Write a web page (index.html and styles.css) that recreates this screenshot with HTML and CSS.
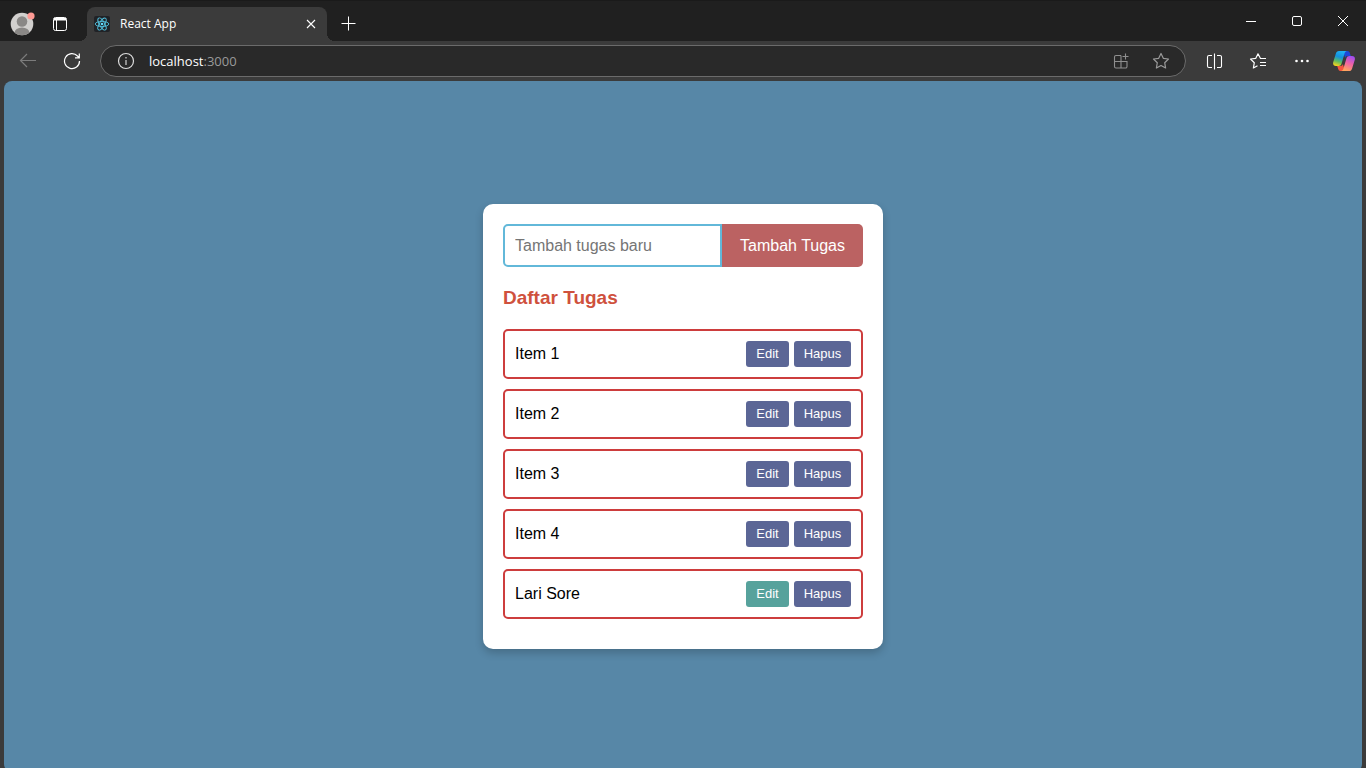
FILE: index.html
```html
<!DOCTYPE html>
<html lang="id">
<head>
<meta charset="utf-8">
<title>React App</title>
<link rel="stylesheet" href="styles.css">
</head>
<body>
<div class="browser">
  <header class="tabstrip">
    <button class="icon-btn profile" aria-label="Profile">
      <svg width="28" height="28" viewBox="0 0 28 28">
        <defs><clipPath id="face"><circle cx="14" cy="15" r="11.3"/></clipPath></defs>
        <circle cx="14" cy="15" r="11.3" fill="#d2d0ce"/>
        <g clip-path="url(#face)" fill="#8a8886"><circle cx="14" cy="12.5" r="5.3"/><ellipse cx="14" cy="24" rx="7.500" ry="5.500"/></g>
        <circle cx="23" cy="7" r="3.600" fill="#ff9a94"/>
      </svg>
    </button>
    <button class="icon-btn tab-actions" aria-label="Tab actions">
      <svg width="16" height="16" viewBox="0 0 16 16" fill="none" stroke="#fff" stroke-width="1">
        <rect x="1.500" y="1.500" width="13" height="13" rx="2"/><path d="M2 2h12v2.500H2z" fill="#fff" stroke="none"/><path d="M4.500 4v10.500"/>
      </svg>
    </button>
    <div class="tab">
      <svg class="favicon" width="16" height="16" viewBox="0 0 16 16" fill="none" stroke="#53c1de" stroke-width=".9">
        <rect width="16" height="16" rx="2" fill="#202226" stroke="none"/>
        <ellipse cx="8" cy="8" rx="6.800" ry="2.600"/>
        <ellipse cx="8" cy="8" rx="6.800" ry="2.600" transform="rotate(60 8 8)"/>
        <ellipse cx="8" cy="8" rx="6.800" ry="2.600" transform="rotate(120 8 8)"/>
        <circle cx="8" cy="8" r="1.300" fill="#61dafb" stroke="none"/>
      </svg>
      <span class="tab-title">React App</span>
      <button class="icon-btn tab-close" aria-label="Close tab">
        <svg width="10" height="10" viewBox="0 0 10 10" stroke="#fff" stroke-width="1.100"><path d="M1 1l8 8M9 1l-8 8"/></svg>
      </button>
    </div>
    <button class="icon-btn new-tab" aria-label="New tab">
      <svg width="15" height="15" viewBox="0 0 15 15" stroke="#fff" stroke-width="1"><path d="M7.500 .5v14M.5 7.500h14"/></svg>
    </button>
    <div class="window-controls">
      <button class="icon-btn window-btn" aria-label="Minimize"><svg width="10" height="10" viewBox="0 0 10 10" stroke="#fff"><path d="M0 5.500h10"/></svg></button>
      <button class="icon-btn window-btn" aria-label="Maximize"><svg width="10" height="10" viewBox="0 0 10 10" fill="none" stroke="#fff"><rect x=".5" y=".5" width="9" height="9" rx="1.500"/></svg></button>
      <button class="icon-btn window-btn" aria-label="Close"><svg width="10" height="10" viewBox="0 0 10 10" stroke="#fff"><path d="M0 0l10 10M10 0L0 10"/></svg></button>
    </div>
  </header>

  <nav class="toolbar" aria-label="Browser toolbar">
    <button class="icon-btn tool" aria-label="Back" disabled>
      <svg width="18" height="16" viewBox="0 0 18 16" fill="none" stroke="#7c7c7c" stroke-width="1.200"><path d="M17 7.500H1.500M8 1L1.500 7.500 8 14"/></svg>
    </button>
    <button class="icon-btn tool" aria-label="Refresh">
      <svg width="18" height="18" viewBox="0 0 18 18" fill="none" stroke="#fff" stroke-width="1.200"><path d="M16.500 9A7.500 7.500 0 1 1 14.500 4L16 5.500M16.300 1.500v4.300H12"/></svg>
    </button>
    <div class="omnibox">
      <button class="icon-btn site-info" aria-label="Site information">
        <svg width="18" height="18" viewBox="0 0 18 18" fill="none" stroke="#dcdcdc" stroke-width="1.200"><circle cx="9" cy="9" r="7.500"/><path d="M9 8v5M9 5v1.500" stroke-width="1.500" stroke="#b0b0b0"/></svg>
      </button>
      <div class="address" role="textbox" aria-label="Address" contenteditable="true" spellcheck="false"><span class="host">localhost</span>:3000</div>
      <button class="icon-btn omni-btn" aria-label="Install app">
        <svg width="16" height="16" viewBox="0 0 16 16" fill="none" stroke="#8f8f8f" stroke-width="1.100"><path d="M8 2.500H3A1.500 1.500 0 0 0 1.500 4v9.500A1.500 1.500 0 0 0 3 15h9.500a1.500 1.500 0 0 0 1.500-1.500V8.500H1.500M8 2.500V15M12.500 .5v6M9.500 3.500h6"/></svg>
      </button>
      <button class="icon-btn omni-btn" aria-label="Add to favorites">
        <svg width="18" height="18" viewBox="0 0 18 18" fill="none" stroke="#9a9a9a" stroke-width="1.200" stroke-linejoin="round"><path d="M9 1.500l2.300 4.800 5.200.7-3.800 3.700.9 5.300L9 13.500 4.400 16l.9-5.300L1.500 7l5.200-.7z"/></svg>
      </button>
    </div>
    <button class="icon-btn tool" aria-label="Split screen">
      <svg width="17" height="17" viewBox="0 0 17 17" fill="none" stroke="#fff" stroke-width="1.100"><path d="M6 2.500H3a1.500 1.500 0 0 0-1.500 1.500v9a1.500 1.500 0 0 0 1.500 1.500h3M11 2.500h3a1.500 1.500 0 0 1 1.500 1.500v9a1.500 1.500 0 0 1-1.500 1.500h-3M8.500 .5v16"/></svg>
    </button>
    <button class="icon-btn tool" aria-label="Favorites">
      <svg width="18" height="18" viewBox="0 0 18 18" fill="none" stroke="#fff" stroke-width="1.200" stroke-linejoin="round"><path d="M17 6.500h-5.500L9 1.800 6.800 6.300 1.500 7l3.800 3.700-.9 5.300L8.500 13.800M11 10.500h6M11 13.500h6"/></svg>
    </button>
    <button class="icon-btn tool" aria-label="Settings and more">
      <svg width="14" height="4" viewBox="0 0 14 4" fill="#fff"><circle cx="1.500" cy="2" r="1.300"/><circle cx="7" cy="2" r="1.300"/><circle cx="12.500" cy="2" r="1.300"/></svg>
    </button>
    <button class="icon-btn copilot" aria-label="Copilot">
      <svg width="22" height="22" viewBox="0 0 22 22">
        <defs>
          <linearGradient id="cool" x1=".6" y1="0" x2=".3" y2="1"><stop offset="0" stop-color="#1fb2f5"/><stop offset=".4" stop-color="#1490dd"/><stop offset=".7" stop-color="#5dbb63"/><stop offset="1" stop-color="#f5d21d"/></linearGradient>
          <linearGradient id="warm" x1=".8" y1="0" x2=".4" y2="1"><stop offset="0" stop-color="#9a4cf5"/><stop offset=".5" stop-color="#f063a5"/><stop offset="1" stop-color="#ffa65c"/></linearGradient>
        </defs>
        <path d="M10 1h4.500c1.300 0 1.900.7 2.300 1.900L17.800 6H15c-1.500 0-2.400.6-2.900 2z" fill="#1c48d8"/>
        <path d="M12 21H7.500c-1.300 0-1.900-.7-2.300-1.900L4.200 16H7c1.500 0 2.400-.6 2.900-2z" fill="#f4553f"/>
        <path d="M6 1h8c-1.300.2-2 1-2.400 2.300L8.600 13.500C8 15.300 7.200 16 5.700 16H3C.6 16-.3 14.300.2 12.300L2.800 3.800C3.400 1.800 4.300 1 6 1z" fill="url(#cool)"/>
        <path d="M16 21H8c1.300-.2 2-1 2.400-2.300L13.400 8.500C14 6.700 14.800 6 16.300 6H19c2.400 0 3.300 1.700 2.800 3.700l-2.600 8.500c-.6 2-1.500 2.800-3.200 2.800z" fill="url(#warm)"/>
      </svg>
    </button>
  </nav>

  <main class="page">
    <section class="card">
      <form class="add-form">
        <input class="task-input" type="text" placeholder="Tambah tugas baru" aria-label="Tambah tugas baru">
        <button class="add-btn" type="button">Tambah Tugas</button>
      </form>
      <h3 class="list-title">Daftar Tugas</h3>
      <ul class="task-list">
        <li class="task"><span class="task-name">Item 1</span><button class="task-btn">Edit</button><button class="task-btn task-btn-delete">Hapus</button></li>
        <li class="task"><span class="task-name">Item 2</span><button class="task-btn">Edit</button><button class="task-btn task-btn-delete">Hapus</button></li>
        <li class="task"><span class="task-name">Item 3</span><button class="task-btn">Edit</button><button class="task-btn task-btn-delete">Hapus</button></li>
        <li class="task"><span class="task-name">Item 4</span><button class="task-btn">Edit</button><button class="task-btn task-btn-delete">Hapus</button></li>
        <li class="task"><span class="task-name">Lari Sore</span><button class="task-btn task-btn-active">Edit</button><button class="task-btn task-btn-delete">Hapus</button></li>
      </ul>
    </section>
  </main>
</div>
</body>
</html>
```
FILE: styles.css
```css
* { box-sizing: border-box; }

body {
  margin: 0;
  font-family: "Liberation Sans", Arial, sans-serif;
}

button, input { font-family: inherit; }

.browser {
  display: flex;
  flex-direction: column;
  height: 100vh;
  overflow: hidden;
  background: #3b3b3b;
}

.icon-btn {
  display: flex;
  align-items: center;
  justify-content: center;
  flex: none;
  padding: 0;
  border: 0;
  background: none;
}

.icon-btn svg { display: block; }

/* Tab strip */
.tabstrip {
  display: flex;
  flex: none;
  height: 41px;
  padding-left: 2px;
  background: #202020;
  border-top: 1px solid #1a1a1a;
}

.profile { width: 40px; padding-top: 4px; }
.tab-actions { width: 36px; padding-top: 6px; }

.tab {
  position: relative;
  display: flex;
  align-items: center;
  width: 240px;
  margin: 6px 0 0 9px;
  padding: 0 6px 0 7px;
  border-radius: 8px 8px 0 0;
  background: #3b3b3b;
  color: #fff;
}

/* Curved feet where the tab meets the toolbar */
.tab::before, .tab::after {
  content: "";
  position: absolute;
  bottom: 0;
  width: 8px;
  height: 8px;
}

.tab::before {
  right: 100%;
  background: radial-gradient(circle at 0 0, #202020 8px, #3b3b3b 8px);
}

.tab::after {
  left: 100%;
  background: radial-gradient(circle at 100% 0, #202020 8px, #3b3b3b 8px);
}

.tab-title {
  flex: 1;
  margin-left: 10px;
  font: 12px/16px "Open Sans", "Noto Sans", sans-serif;
}

.tab-close { width: 20px; height: 20px; }
.new-tab { width: 43px; padding-top: 5px; }
.window-controls { display: flex; margin-left: auto; }
.window-btn { width: 46px; }

/* Toolbar */
.toolbar {
  display: flex;
  flex: none;
  align-items: center;
  height: 40px;
  padding: 0 2px 0 6px;
}

.tool { width: 44px; height: 32px; }
.copilot { width: 40px; height: 32px; }

.omnibox {
  display: flex;
  flex: 1;
  align-items: center;
  height: 32px;
  margin: 0 6px;
  padding: 0 4px 0 15px;
  border: 1px solid #6b6b6b;
  border-radius: 16px;
  background: #292929;
}

.site-info { width: 20px; }

.address {
  flex: 1;
  margin-left: 13px;
  color: #9a9a9a;
  font: 13px/20px "Open Sans", "Noto Sans", sans-serif;
  outline: 0;
}

.host { color: #fff; }
.omni-btn { width: 40px; }

/* Page */
.page {
  display: flex;
  flex: 1;
  align-items: center;
  justify-content: center;
  margin: 0 4px -4px;
  border-radius: 8px;
  background: #5787a7;
}

.card {
  width: 400px;
  max-width: 100%;
  padding: 20px;
  border-radius: 10px;
  background: #fff;
  box-shadow: 0 4px 8px rgba(0, 0, 0, 0.2);
}

.add-form { display: flex; }

.task-input {
  flex: 1;
  min-width: 0;
  padding: 10px;
  border: 2px solid #62b8d9;
  border-radius: 5px 0 0 5px;
  background: #fff;
  font-size: 16px;
  line-height: 19px;
}

.task-input::placeholder { color: #757575; }

.add-btn {
  padding: 10px 18px;
  border: 0;
  border-radius: 0 5px 5px 0;
  background: #bb6262;
  color: #fff;
  font-size: 16px;
}

.list-title {
  margin: 20px 0;
  color: #cf513d;
  font-size: 19px;
  line-height: 22px;
}

.task-list {
  margin: 0;
  padding: 0;
  list-style: none;
}

.task {
  display: flex;
  align-items: center;
  gap: 5px;
  margin-bottom: 10px;
  padding: 10px;
  border: 2px solid #cd3d3d;
  border-radius: 5px;
  color: #000;
  font-size: 16px;
}

.task-name { flex: 1; }

.task-btn {
  min-width: 43px;
  padding: 5px 9px;
  border: 0;
  border-radius: 3px;
  background: #5b6696;
  color: #fff;
  font-size: 13px;
  line-height: 16px;
}

.task-btn-delete { min-width: 57px; }
.task-btn-active { background: #57a29c; }
```
